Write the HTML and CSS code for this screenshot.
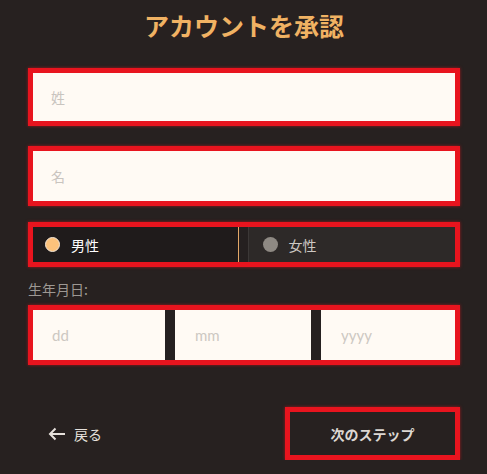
FILE: index.html
```html
<!DOCTYPE html>
<html lang="ja">
<head>
    <meta charset="UTF-8">
    <meta name="viewport" content="width=device-width, initial-scale=1.0">
    <title>アカウントを承認</title>
    <link rel="stylesheet" href="styles.css">
</head>
<body>

    <div class="verify">
        <h2>アカウントを承認</h2>

        <div class="field">
            <input type="text" placeholder="姓">
        </div>

        <div class="field field-second">
            <input type="text" placeholder="名">
        </div>

        <div class="gender">
            <label class="gender-option male">
                <span class="radio"></span>
                <span>男性</span>
            </label>
            <label class="gender-option female">
                <span class="radio"></span>
                <span>女性</span>
            </label>
        </div>

        <div class="dob-label">生年月日:</div>
        <div class="dob">
            <input type="text" placeholder="dd">
            <input type="text" placeholder="mm">
            <input type="text" placeholder="yyyy">
        </div>

        <div class="actions">
            <a class="back" href="#">
                <svg width="18" height="14" viewBox="0 0 18 14">
                    <path d="M17 7H2M7.5 1.5L2 7l5.5 5.5" fill="none" stroke="#e6e1dc" stroke-width="2"/>
                </svg>
                <span>戻る</span>
            </a>
            <button class="next">次のステップ</button>
        </div>
    </div>

</body>
</html>
```

FILE: styles.css
```css
body {
    margin: 0;
    background-color: #272120;
    font-family: 'Noto Sans CJK JP', 'Noto Sans', sans-serif;
    color: #e6e1dc;
}

.verify {
    width: 432px;
    padding: 8px 0 0 28px;
}

h2 {
    margin: 0 0 26px;
    text-align: center;
    font-size: 25px;
    line-height: 34px;
    font-weight: 700;
    color: #f0b263;
}

.field {
    border: 5px solid #e8141e;
    box-shadow: 0 0 3px rgba(232, 20, 30, 0.6);
    height: 48px;
}

.field-second {
    margin-top: 20px;
    height: 50px;
}

.field input,
.dob input {
    display: block;
    width: 100%;
    height: 100%;
    box-sizing: border-box;
    border: none;
    outline: none;
    background-color: #fffaf4;
    padding: 0 0 0 18px;
    font-family: 'Noto Sans CJK JP', 'Noto Sans', sans-serif;
    font-size: 14px;
    color: #333;
}

.field input::placeholder {
    color: #c9c4bf;
}

.gender {
    margin-top: 16px;
    border: 5px solid #e8141e;
    box-shadow: 0 0 3px rgba(232, 20, 30, 0.6);
    height: 35px;
    display: flex;
    gap: 9px;
    background-color: #252020;
}

.gender-option {
    flex: 1;
    display: flex;
    align-items: center;
    gap: 11px;
    padding-left: 12px;
    font-size: 14px;
}

.male {
    background-color: #1f1b1b;
    color: #ffffff;
    border-right: 1px solid #e3a868;
}

.female {
    background-color: #2d2928;
    color: #cdc8c3;
    border-left: 1px solid #3c3837;
    padding-left: 14px;
}

.radio {
    width: 13px;
    height: 13px;
    border-radius: 50%;
}

.male .radio {
    background-color: #fcc27b;
    border: 1px solid #f3e6d8;
}

.female .radio {
    width: 15px;
    height: 15px;
    background-color: #8e8983;
}

.dob-label {
    margin-top: 12px;
    font-size: 14px;
    line-height: 20px;
    color: #9d9893;
}

.dob {
    margin-top: 6px;
    border: 5px solid #e8141e;
    box-shadow: 0 0 3px rgba(232, 20, 30, 0.6);
    height: 50px;
    display: grid;
    grid-template-columns: 132px 136px 1fr;
    gap: 10px;
    background-color: #252020;
}

.dob input {
    padding-left: 20px;
    font-family: 'Lato', 'Noto Sans', sans-serif;
    font-size: 15px;
}

.dob input::placeholder {
    color: #cdc8c2;
}

.dob input:first-child {
    padding-left: 19px;
}

.actions {
    margin-top: 42px;
    display: flex;
    justify-content: space-between;
    align-items: center;
}

.back {
    display: flex;
    align-items: center;
    gap: 8px;
    margin-left: 20px;
    color: #e6e1dc;
    text-decoration: none;
    font-size: 14px;
}

.next {
    width: 175px;
    height: 53px;
    border: 5px solid #e8141e;
    box-shadow: 0 0 3px rgba(232, 20, 30, 0.6);
    background-color: #272120;
    color: #dcd7d2;
    font-family: 'Noto Sans CJK JP', 'Noto Sans', sans-serif;
    font-size: 14px;
    font-weight: 700;
    cursor: pointer;
}
```
